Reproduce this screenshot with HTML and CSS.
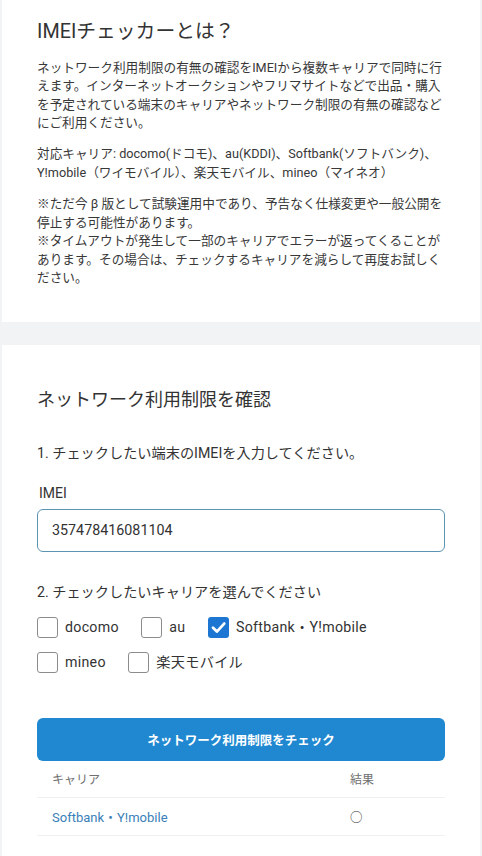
FILE: index.html
```html
<!DOCTYPE html>
<html lang="ja">
<head>
<meta charset="utf-8">
<title>IMEIチェッカー</title>
<link rel="stylesheet" href="styles.css">
</head>
<body>
<section class="card card-about">
  <h1 class="about-title">IMEIチェッカーとは？</h1>
  <p class="about-text">ネットワーク利用制限の有無の確認をIMEIから複数キャリアで同時に行えます。インターネットオークションやフリマサイトなどで出品・購入を予定されている端末のキャリアやネットワーク制限の有無の確認などにご利用ください。</p>
  <p class="about-text">対応キャリア: docomo(ドコモ)、au(KDDI)、Softbank(ソフトバンク)、Y!mobile（ワイモバイル）、楽天モバイル、mineo（マイネオ）</p>
  <p class="about-text">※ただ今 β 版として試験運用中であり、予告なく仕様変更や一般公開を停止する可能性があります。<br>※タイムアウトが発生して一部のキャリアでエラーが返ってくることがあります。その場合は、チェックするキャリアを減らして再度お試しください。</p>
</section>

<section class="card card-check">
  <h2 class="check-title">ネットワーク利用制限を確認</h2>
  <p class="step step-1">1. チェックしたい端末のIMEIを入力してください。</p>
  <label class="field-label" for="imei">IMEI</label>
  <input class="imei-input" id="imei" type="text" value="357478416081104">
  <p class="step step-2">2. チェックしたいキャリアを選んでください</p>
  <div class="carriers">
    <div class="carrier-row">
      <span class="carrier"><span class="box"></span><span class="carrier-name">docomo</span></span>
      <span class="carrier"><span class="box"></span><span class="carrier-name">au</span></span>
      <span class="carrier"><span class="box box-checked"><svg viewBox="0 0 21 21" width="21" height="21"><path d="M5 10.8 L8.9 14.6 L16.2 6.6" fill="none" stroke="#fff" stroke-width="2.8" stroke-linecap="round" stroke-linejoin="round"/></svg></span><span class="carrier-name">Softbank・Y!mobile</span></span>
    </div>
    <div class="carrier-row">
      <span class="carrier"><span class="box"></span><span class="carrier-name">mineo</span></span>
      <span class="carrier"><span class="box"></span><span class="carrier-name">楽天モバイル</span></span>
    </div>
  </div>
  <button class="check-button" type="button">ネットワーク利用制限をチェック</button>
  <div class="result-table">
    <div class="result-row result-head">
      <span class="cell">キャリア</span>
      <span class="cell">結果</span>
    </div>
    <div class="result-row">
      <span class="cell cell-carrier">Softbank・Y!mobile</span>
      <span class="cell cell-result">○</span>
    </div>
  </div>
</section>
</body>
</html>
```
FILE: styles.css
```css
* {
  box-sizing: border-box;
}

html, body {
  margin: 0;
  padding: 0;
}

body {
  background: #f2f3f5;
  font-family: Roboto, "Noto Sans CJK JP", sans-serif;
  color: #333;
  width: 482px;
  height: 856px;
  overflow: hidden;
}

.card {
  background: #fff;
  margin: 0 2px;
  padding: 0 35px;
}

.card-about {
  padding-top: 18px;
  padding-bottom: 34px;
}

.about-title {
  margin: 0 0 12.7px;
  font-size: 19.8px;
  line-height: 28px;
  font-weight: 400;
  color: #333;
}

.about-text {
  margin: 0 0 12.66px;
  font-size: 12.66px;
  line-height: 18.5px;
  color: #383838;
}

.about-text:last-child {
  margin-bottom: 0;
}

.card-check {
  margin-top: 23px;
  padding-top: 42px;
  padding-bottom: 40px;
}

.check-title {
  margin: 0 0 30px;
  font-size: 18px;
  line-height: 26px;
  font-weight: 400;
  color: #333;
}

.step {
  margin: 0;
  font-size: 14.2px;
  line-height: 20px;
  color: #333;
}

.step-1 {
  margin-bottom: 21px;
}

.field-label {
  display: block;
  padding-left: 2px;
  font-size: 14px;
  line-height: 18px;
  margin-bottom: 7px;
  color: #333;
}

.imei-input {
  display: block;
  width: 100%;
  height: 43px;
  border: 1px solid #5a94b2;
  border-radius: 6px;
  padding: 0 14px;
  font-family: Roboto, "Noto Sans CJK JP", sans-serif;
  font-size: 14.3px;
  color: #333;
  background: #fff;
  outline: none;
  margin-bottom: 30px;
}

.carriers {
  margin-top: 15px;
  display: flex;
  flex-direction: column;
  gap: 14px;
}

.carrier-row {
  display: flex;
  align-items: center;
  gap: 22.5px;
}

.carrier {
  display: flex;
  align-items: center;
  gap: 7px;
  font-size: 14.2px;
  line-height: 21px;
  color: #333;
}

.carrier-name {
  letter-spacing: 0.02em;
}

.box {
  display: block;
  width: 21px;
  height: 21px;
  border: 1px solid #8c8c8c;
  border-radius: 3px;
  background: #fff;
}

.box-checked {
  border: none;
  background: #1d77d2;
}

.box-checked svg {
  display: block;
}

.check-button {
  display: block;
  width: 100%;
  height: 43px;
  margin-top: 45px;
  border: none;
  border-radius: 6px;
  background: #1f88d0;
  color: #fff;
  font-family: "Noto Sans CJK JP", sans-serif;
  font-size: 12.5px;
  font-weight: 700;
  cursor: pointer;
}

.result-table {
  display: flex;
  flex-direction: column;
}

.result-row {
  display: grid;
  grid-template-columns: 1fr 110px;
  align-items: center;
  height: 38px;
  border-bottom: 1px solid #f0f0f0;
}

.result-head {
  height: 37px;
  font-size: 12px;
  color: #6f6f6f;
}

.cell {
  padding: 0 15px;
}

.cell-carrier {
  font-size: 13px;
  color: #3a80b8;
}

.cell-result {
  font-size: 12.5px;
  color: #333;
}
```
